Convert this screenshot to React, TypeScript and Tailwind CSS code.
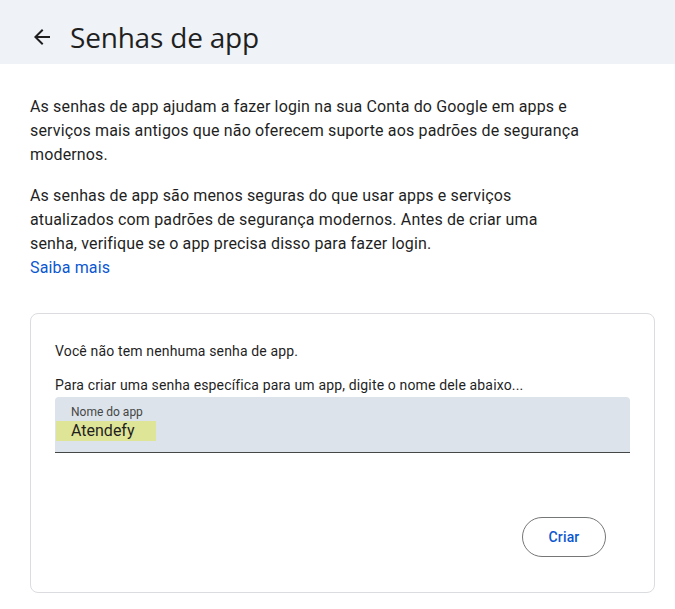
export default function App() {
  return (
    <div className="min-h-[609px] w-[675px] bg-white text-[#1f1f1f] font-['Roboto','Liberation_Sans',sans-serif]">
      <header className="flex h-16 items-center bg-[#eff2f7] pl-[30px] pt-[9px]">
        <button className="flex h-6 w-6 items-center justify-center text-[#1f1f1f]" aria-label="Voltar">
          <svg width="24" height="24" viewBox="0 0 24 24" fill="currentColor">
            <path d="M20 11H7.83l5.59-5.59L12 4l-8 8 8 8 1.41-1.41L7.83 13H20v-2z" />
          </svg>
        </button>
        <h1 className="ml-4 text-[28px] leading-9 font-normal tracking-[-0.2px] font-['Open_Sans','Roboto',sans-serif]">Senhas de app</h1>
      </header>

      <main className="px-[30px] pt-[31px] tracking-[0.15px]">
        <p className="text-base leading-6">
          As senhas de app ajudam a fazer login na sua Conta do Google em apps e
          <br />
          serviços mais antigos que não oferecem suporte aos padrões de segurança
          <br />
          modernos.
        </p>
        <p className="mt-[17px] text-base leading-6">
          As senhas de app são menos seguras do que usar apps e serviços
          <br />
          atualizados com padrões de segurança modernos. Antes de criar uma
          <br />
          senha, verifique se o app precisa disso para fazer login.
          <br />
          <a href="#" className="text-[#0b57d0]">Saiba mais</a>
        </p>

        <section className="mt-[33px] h-[280px] w-[625px] rounded-lg border border-[#dadce0] px-6 pt-[27px]">
          <p className="text-sm leading-5">Você não tem nenhuma senha de app.</p>
          <p className="mt-[14px] text-sm leading-5">Para criar uma senha específica para um app, digite o nome dele abaixo...</p>
          <div className="mt-[2px] flex h-14 flex-col rounded-t border-b border-[#444746] bg-[#dde3ea] px-4 pt-[7px]">
            <span className="text-xs leading-4 tracking-normal text-[#444746]">Nome do app</span>
            <span className="-ml-[15px] mt-[1px] w-[100px] bg-[#dfe597] pl-[15px] text-base leading-5 tracking-normal">Atendefy</span>
          </div>
          <div className="mt-16 flex justify-end pr-6">
            <button className="h-10 w-[84px] rounded-full border border-[#747775] text-sm font-medium text-[#0b57d0]">
              Criar
            </button>
          </div>
        </section>
      </main>
    </div>
  );
}
